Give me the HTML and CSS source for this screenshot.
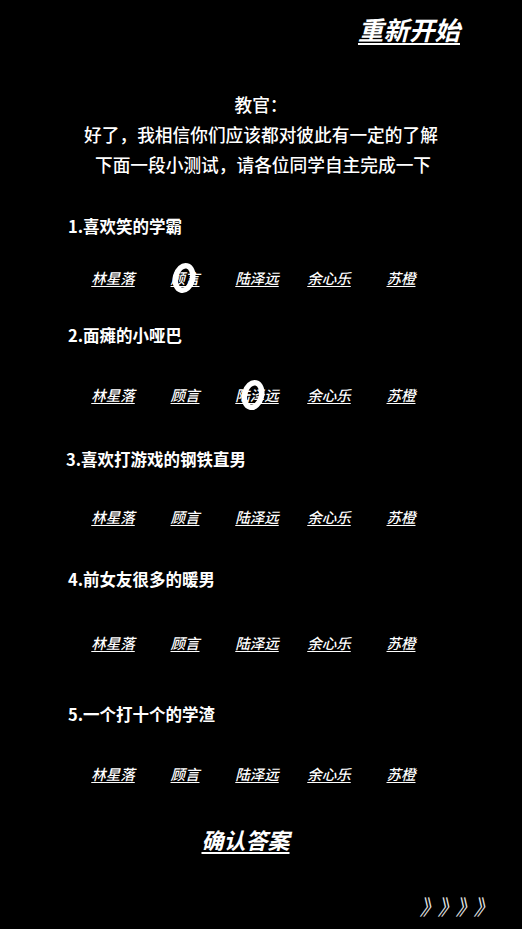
FILE: index.html
```html
<!DOCTYPE html>
<html lang="zh">
<head>
<meta charset="utf-8">
<link rel="stylesheet" href="styles.css">
</head>
<body>
<div class="page">
  <div class="header"><span class="restart">重新开始</span></div>
  <div class="intro">
    <div class="line">教官：</div>
    <div class="line">好了，我相信你们应该都对彼此有一定的了解</div>
    <div class="line line-shift">下面一段小测试，请各位同学自主完成一下</div>
  </div>

  <div class="q q1">1.喜欢笑的学霸</div>
  <div class="opts o1">
    <span class="opt">林星落</span>
    <span class="opt">顾言<svg class="ring ring-a" viewBox="0 0 24 32" width="24" height="32"><ellipse cx="12" cy="16" rx="8.5" ry="12.5" fill="none" stroke="#fff" stroke-width="5.5" transform="rotate(14 12 16)"/></svg></span>
    <span class="opt">陆泽远</span>
    <span class="opt">余心乐</span>
    <span class="opt">苏橙</span>
  </div>

  <div class="q q2">2.面瘫的小哑巴</div>
  <div class="opts o2">
    <span class="opt">林星落</span>
    <span class="opt">顾言</span>
    <span class="opt">陆泽远<svg class="ring ring-b" viewBox="0 0 24 32" width="24" height="32"><ellipse cx="12" cy="16" rx="8.5" ry="12.5" fill="none" stroke="#fff" stroke-width="5.5" transform="rotate(14 12 16)"/></svg></span>
    <span class="opt">余心乐</span>
    <span class="opt">苏橙</span>
  </div>

  <div class="q q3">3.喜欢打游戏的钢铁直男</div>
  <div class="opts o3">
    <span class="opt">林星落</span>
    <span class="opt">顾言</span>
    <span class="opt">陆泽远</span>
    <span class="opt">余心乐</span>
    <span class="opt">苏橙</span>
  </div>

  <div class="q q4">4.前女友很多的暖男</div>
  <div class="opts o4">
    <span class="opt">林星落</span>
    <span class="opt">顾言</span>
    <span class="opt">陆泽远</span>
    <span class="opt">余心乐</span>
    <span class="opt">苏橙</span>
  </div>

  <div class="q q5">5.一个打十个的学渣</div>
  <div class="opts o5">
    <span class="opt">林星落</span>
    <span class="opt">顾言</span>
    <span class="opt">陆泽远</span>
    <span class="opt">余心乐</span>
    <span class="opt">苏橙</span>
  </div>

  <div class="confirm"><span class="confirm-text">确认答案</span></div>
  <div class="arrows">》》》》</div>
</div>
</body>
</html>
```

FILE: styles.css
```css
html, body {
  margin: 0;
  padding: 0;
  background: #000;
}
body {
  width: 522px;
  height: 929px;
  overflow: hidden;
  font-family: "Noto Sans CJK SC", "Noto Sans", sans-serif;
  color: #fff;
}
.page {
  display: flex;
  flex-direction: column;
}
.header {
  display: flex;
  justify-content: flex-end;
  padding: 14px 62px 0 0;
  height: 30px;
}
.restart {
  font-size: 25.5px;
  line-height: 30px;
  font-weight: 700;
  font-style: italic;
  text-decoration: underline;
  text-decoration-thickness: 2px;
  text-underline-offset: 3px;
}
.intro {
  margin-top: 45px;
  text-align: center;
  font-size: 17.7px;
  line-height: 30px;
  font-weight: 500;
}
.line-shift {
  padding-left: 4px;
}
.q {
  padding-left: 68px;
  font-size: 16.5px;
  line-height: 24px;
  font-weight: 700;
}
.q1 { margin-top: 35px; }
.q2 { margin-top: 33px; }
.q3 { margin-top: 40px; padding-left: 66px; }
.q4 { margin-top: 38px; }
.q5 { margin-top: 47px; }
.opts {
  display: flex;
  padding-left: 77px;
  height: 24px;
}
.o1 { margin-top: 28px; }
.o2 { margin-top: 36px; }
.o3 { margin-top: 34px; }
.o4 { margin-top: 40px; }
.o5 { margin-top: 36px; }
.opt {
  position: relative;
  width: 72px;
  text-align: center;
  font-size: 14.5px;
  line-height: 24px;
  font-style: italic;
  font-weight: 500;
  text-decoration: underline;
  text-underline-offset: 2px;
}
.ring {
  position: absolute;
  top: -4px;
}
.ring-a { left: 23px; }
.ring-b { left: 20px; }
.confirm {
  margin-top: 38px;
  text-align: center;
  padding-right: 31px;
}
.confirm-text {
  font-size: 22px;
  line-height: 30px;
  font-weight: 700;
  font-style: italic;
  text-decoration: underline;
  text-decoration-thickness: 2px;
  text-underline-offset: 3px;
}
.arrows {
  margin-top: 41px;
  text-align: right;
  padding-right: 20px;
  font-size: 21px;
  line-height: 22px;
  letter-spacing: 7.5px;
  font-style: italic;
  color: #e6e6e6;
}
```
